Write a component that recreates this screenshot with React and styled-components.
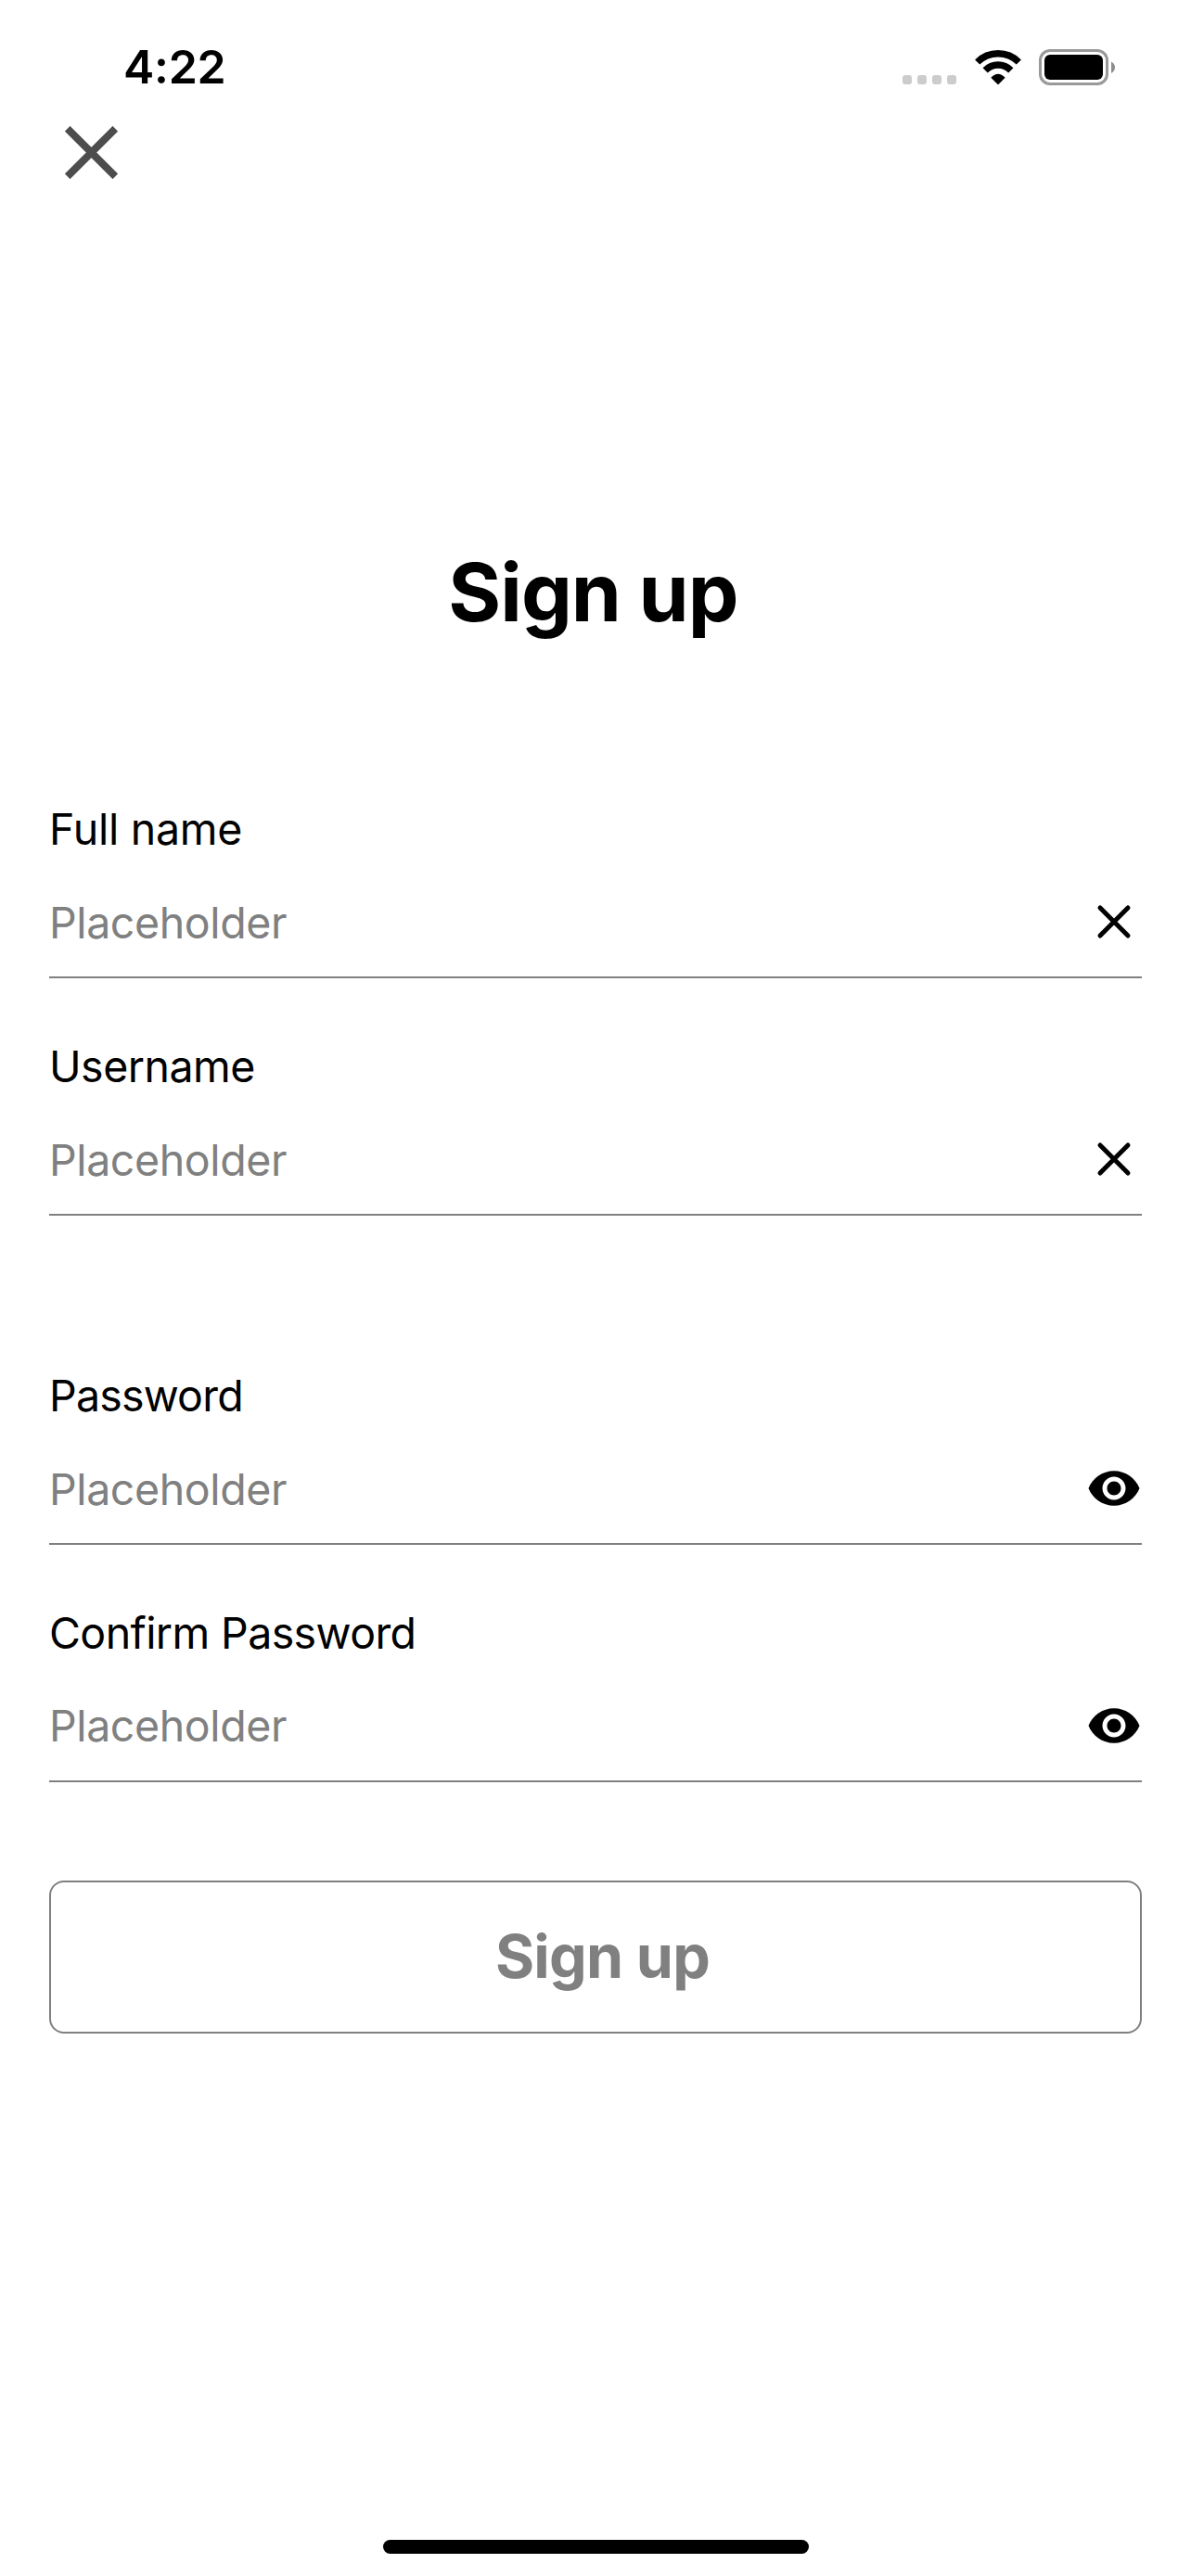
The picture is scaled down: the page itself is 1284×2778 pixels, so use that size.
import React from "react";
import styled, { createGlobalStyle } from "styled-components";

const GlobalStyle = createGlobalStyle`
  *, *::before, *::after { box-sizing: border-box; }
  body { margin: 0; background: #fff; }
`;

const Screen = styled.div`
  display: flex;
  flex-direction: column;
  width: 1284px;
  height: 2778px;
  background: #fff;
  color: #000;
  font-family: Inter, Roboto, "Liberation Sans", sans-serif;
  overflow: hidden;
`;

const StatusBar = styled.header`
  display: flex;
  justify-content: space-between;
  height: 136px;
  padding: 0 82px 0 133px;
`;

const Clock = styled.time`
  height: 145px;
  line-height: 145px;
  font-size: 50px;
  font-weight: 600;
  letter-spacing: -0.3px;
  white-space: nowrap;
`;

const StatusIcons = styled.div`
  display: flex;
  align-items: flex-start;
  padding-top: 53px;
`;

const Signal = styled.div`
  display: flex;
  gap: 6px;
  margin: 28px 19px 0 0;
`;

const Dot = styled.i`
  width: 10px;
  height: 10px;
  border-radius: 3px;
  background: #ccc;
`;

const WifiSvg = styled.svg`
  width: 52px;
  height: 39px;
  margin-right: 18px;
`;

const BatterySvg = styled.svg`
  width: 82px;
  height: 39px;
`;

const Content = styled.main`
  display: flex;
  flex-direction: column;
  padding: 0 53px;
`;

const CloseButton = styled.button`
  display: flex;
  width: 57px;
  height: 57px;
  margin-left: 17px;
  padding: 0;
  border: 0;
  background: none;
  color: #4d4d4d;
`;

const Title = styled.h1`
  margin: 394px 5px 0 0;
  height: 104px;
  line-height: 104px;
  font-size: 87px;
  font-weight: 700;
  letter-spacing: -1px;
  text-align: center;
`;

const Form = styled.form`
  display: flex;
  flex-direction: column;
  margin-top: 175px;
`;

const FieldGroup = styled.div`
  display: flex;
  flex-direction: column;
  gap: 67px;
  margin-bottom: ${(p) => p.$after}px;
`;

const Field = styled.label`
  display: flex;
  flex-direction: column;
  gap: 15px;
`;

const FieldLabel = styled.span`
  height: 56px;
  line-height: 56px;
  font-size: 46.5px;
  letter-spacing: ${(p) => p.$tracking}px;
`;

const InputRow = styled.span`
  display: flex;
  align-items: center;
  justify-content: space-between;
  height: 118px;
  border-bottom: 2px solid #808080;
`;

const Input = styled.input`
  flex: 1;
  min-width: 0;
  height: 56px;
  margin-bottom: ${(p) => p.$lift}px;
  padding: 0;
  border: 0;
  outline: 0;
  background: none;
  font: 400 46.5px/56px Inter, Roboto, "Liberation Sans", sans-serif;
  letter-spacing: -0.4px;
  &::placeholder { color: #808080; opacity: 1; }
`;

const FieldIcon = styled.svg`
  width: 60px;
  height: 60px;
  margin-bottom: 2px;
  fill: #000;
`;

const Submit = styled.button`
  height: 165px;
  padding: 0 0 2px 15px;
  border: 2px solid #808080;
  border-radius: 16px;
  background: #fff;
  color: #808080;
  font: 700 64.5px/78px Inter, Roboto, "Liberation Sans", sans-serif;
  letter-spacing: -0.8px;
  text-align: center;
`;

const HomeIndicator = styled.div`
  width: 459px;
  height: 15px;
  margin: auto 0 24px 413px;
  flex-shrink: 0;
  border-radius: 8px;
  background: #000;
`;

const WifiIcon = () => (
  <WifiSvg viewBox="299 69 156 117">
    <g fill="none" stroke="#000">
      <path d="M310 111 A95 95 0 0 1 444 111" strokeWidth="22" />
      <path d="M335.5 137.500 A58 58 0 0 1 418.500 137.500" strokeWidth="22" />
    </g>
    <path d="M354 161 Q377 137 400 161 L379 182 Q377 184 375 182 Z" />
  </WifiSvg>
);

const BatteryIcon = () => (
  <BatterySvg viewBox="0 0 82 39">
    <rect x="1.5" y="1.5" width="72" height="36" rx="10.500" fill="none" stroke="#999" strokeWidth="3" />
    <rect x="6" y="6" width="63" height="27" rx="6" />
    <path d="M78 13.500 Q82 16 82 19.500 Q82 23.500 78 26 Z" fill="#8c8c8c" />
  </BatterySvg>
);

const ClearIcon = () => (
  <FieldIcon viewBox="0 0 60 60">
    <path d="M15 15 L45 45 M45 15 L15 45" stroke="#000" strokeWidth="5" strokeLinecap="round" />
  </FieldIcon>
);

const EyeIcon = () => (
  <FieldIcon viewBox="0 0 24 24">
    <path d="M12 4.500C7 4.500 2.730 7.610 1 12c1.730 4.390 6 7.500 11 7.500s9.270-3.110 11-7.500c-1.730-4.390-6-7.500-11-7.500zM12 17c-2.760 0-5-2.240-5-5s2.240-5 5-5 5 2.240 5 5-2.240 5-5 5zm0-8c-1.660 0-3 1.340-3 3s1.340 3 3 3 3-1.340 3-3-1.340-3-3-3z" />
  </FieldIcon>
);

const groups = [
  {
    after: 166,
    Icon: ClearIcon,
    fields: [
      { label: "Full name", type: "text", tracking: -0.25, lift: 0 },
      { label: "Username", type: "text", tracking: -0.5, lift: 0 },
    ],
  },
  {
    after: 106,
    Icon: EyeIcon,
    fields: [
      { label: "Password", type: "password", tracking: -0.8, lift: 0 },
      { label: "Confirm Password", type: "password", tracking: -0.6, lift: 2 },
    ],
  },
];

export default function App() {
  return (
    <Screen>
      <GlobalStyle />
      <StatusBar>
        <Clock>4:22</Clock>
        <StatusIcons>
          <Signal>
            <Dot /><Dot /><Dot /><Dot />
          </Signal>
          <WifiIcon />
          <BatteryIcon />
        </StatusIcons>
      </StatusBar>
      <Content>
        <CloseButton type="button" aria-label="Close">
          <svg width="57" height="57" viewBox="0 0 57 57">
            <path d="M2.700 2.700 L54.300 54.300 M54.300 2.700 L2.700 54.300" stroke="currentColor" strokeWidth="8" />
          </svg>
        </CloseButton>
        <Title>Sign up</Title>
        <Form>
          {groups.map(({ after, Icon, fields }) => (
            <FieldGroup key={after} $after={after}>
              {fields.map((f) => (
                <Field key={f.label}>
                  <FieldLabel $tracking={f.tracking}>{f.label}</FieldLabel>
                  <InputRow>
                    <Input type={f.type} placeholder="Placeholder" $lift={f.lift} />
                    <Icon />
                  </InputRow>
                </Field>
              ))}
            </FieldGroup>
          ))}
          <Submit type="button">Sign up</Submit>
        </Form>
      </Content>
      <HomeIndicator />
    </Screen>
  );
}
